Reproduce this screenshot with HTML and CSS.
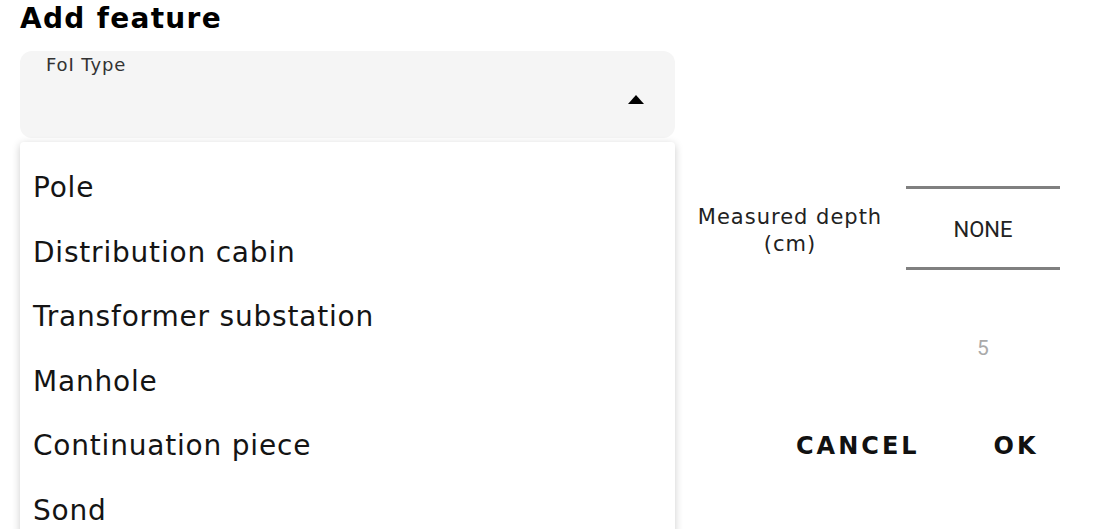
FILE: index.html
```html
<!DOCTYPE html>
<html lang="en">
<head>
    <meta charset="UTF-8">
    <meta name="viewport" content="width=device-width, initial-scale=1.0">
    <title>Add feature</title>
    <link rel="stylesheet" href="styles.css">
</head>
<body>
    <h1 class="title">Add feature</h1>
    <div class="layout">
        <div class="form">
            <div class="field">
                <span class="field-label">FoI Type</span>
                <span class="arrow"></span>
            </div>
            <ul class="menu">
                <li>Pole</li>
                <li>Distribution cabin</li>
                <li>Transformer substation</li>
                <li>Manhole</li>
                <li>Continuation piece</li>
                <li>Sond</li>
            </ul>
        </div>
        <div class="side">
            <div class="depth">
                <div class="depth-label">Measured depth<br>(cm)</div>
                <div class="picker-col">
                    <div class="picker">NONE</div>
                    <div class="picker-next">5</div>
                </div>
            </div>
            <div class="actions">
                <button class="action-btn cancel">CANCEL</button>
                <button class="action-btn ok">OK</button>
            </div>
        </div>
    </div>
</body>
</html>
```

FILE: styles.css
```css
* {
    box-sizing: border-box;
}

body {
    margin: 0;
    padding: 0;
    width: 1107px;
    height: 529px;
    overflow: hidden;
    background: #fff;
    color: #111;
    font-family: "DejaVu Sans", sans-serif;
}

.title {
    margin: 0;
    padding: 1px 0 0 20px;
    font-size: 28px;
    line-height: 35px;
    font-weight: bold;
    letter-spacing: 1.3px;
    color: #000;
}

.layout {
    display: flex;
    margin-top: 15px;
}

.form {
    width: 655px;
    margin-left: 20px;
}

.field {
    display: flex;
    justify-content: space-between;
    height: 87px;
    padding: 3px 31px 0 26px;
    background: #f5f5f5;
    border-radius: 12px;
}

.field-label {
    align-self: flex-start;
    font-size: 18px;
    line-height: 21px;
    letter-spacing: 0.9px;
    color: #333;
}

.arrow {
    align-self: center;
    margin-top: 6px;
    width: 0;
    height: 0;
    border-left: 8px solid transparent;
    border-right: 8px solid transparent;
    border-bottom: 9px solid #000;
}

.menu {
    list-style: none;
    margin: 4px 0 0;
    padding: 14px 0 0 13px;
    height: 420px;
    background: #fff;
    border-radius: 4px;
    box-shadow: 0 2px 8px rgba(0, 0, 0, 0.2);
}

.menu li {
    font-size: 28px;
    line-height: 64.5px;
    letter-spacing: 0.8px;
    color: #141414;
}

.side {
    flex: 1;
    padding-top: 135px;
}

.depth {
    display: flex;
    align-items: flex-start;
}

.depth-label {
    width: 190px;
    margin-left: 20px;
    margin-top: 18px;
    text-align: center;
    font-size: 21px;
    line-height: 27px;
    letter-spacing: 1px;
    color: #222;
}

.picker-col {
    display: flex;
    flex-direction: column;
    align-items: center;
    width: 154px;
    margin-left: 21px;
}

.picker {
    width: 100%;
    height: 84px;
    border-top: 3px solid #808080;
    border-bottom: 3px solid #808080;
    display: flex;
    align-items: center;
    justify-content: center;
    font-family: Roboto, sans-serif;
    font-size: 22px;
    color: #222;
    padding-top: 3px;
}

.picker-next {
    margin-top: 66px;
    font-family: Roboto, sans-serif;
    font-size: 21px;
    line-height: 24px;
    color: #aaa;
}

.actions {
    display: flex;
    gap: 74px;
    margin-top: 71px;
    margin-left: 121px;
}

.action-btn {
    padding: 0;
    border: none;
    background: none;
    font-family: "DejaVu Sans", sans-serif;
    font-size: 24px;
    line-height: 30px;
    font-weight: bold;
    letter-spacing: 3px;
    color: #111;
    cursor: pointer;
}
```
